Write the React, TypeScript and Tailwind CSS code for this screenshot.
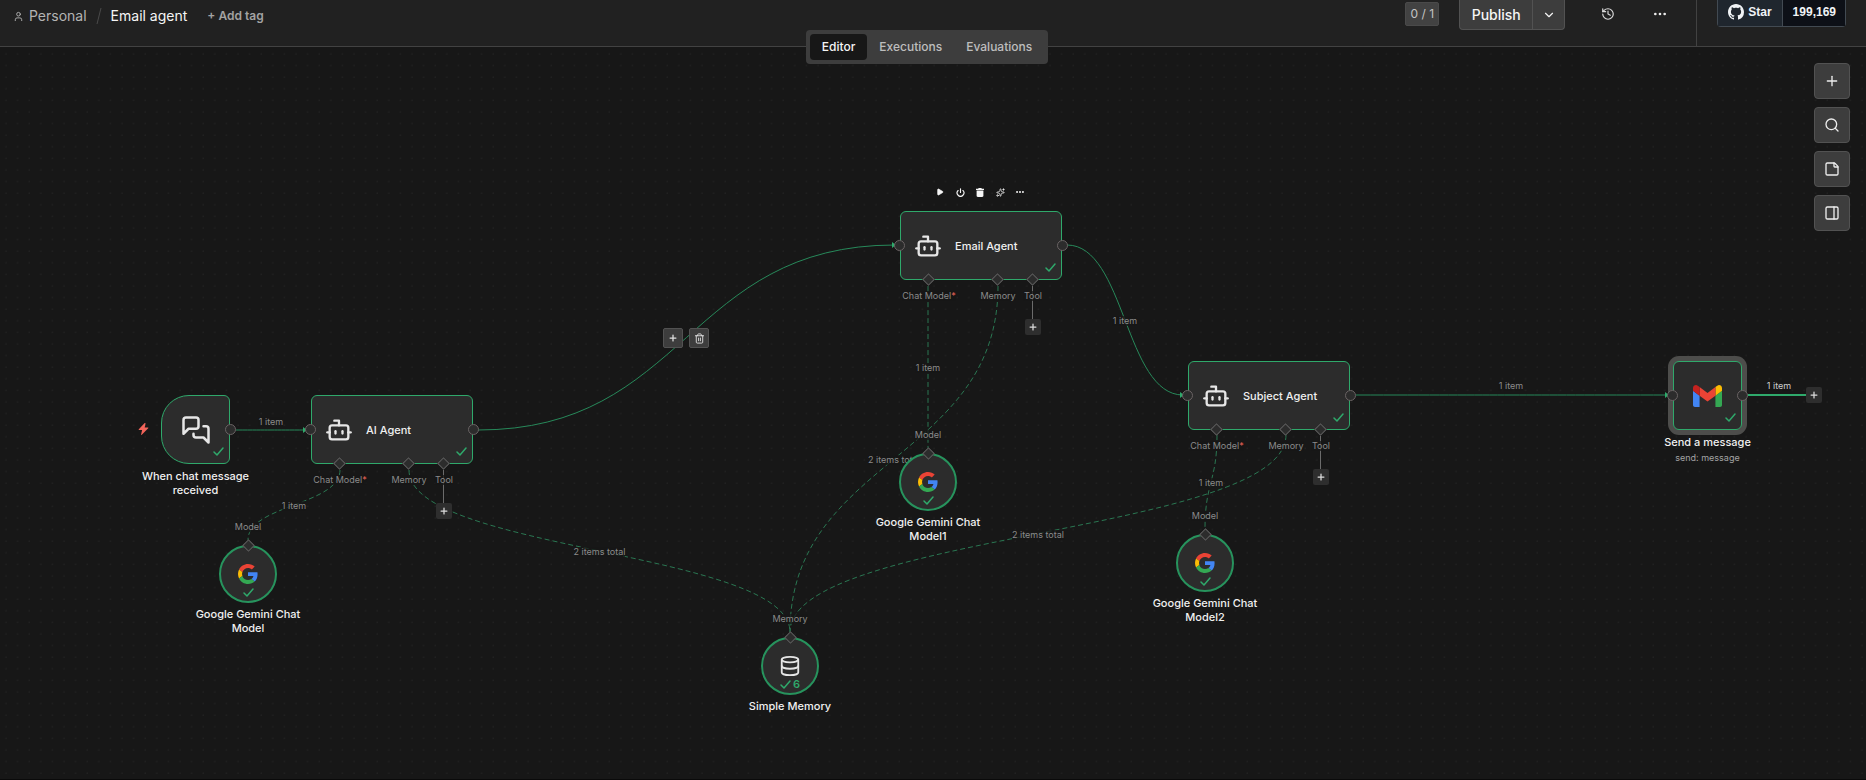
import React from 'react'
import {
  Bot,
  ChevronDown,
  Database,
  Ellipsis,
  History,
  PanelRight,
  Play,
  Plus,
  Power,
  Search,
  Sparkles,
  StickyNote,
  Trash2,
  User,
} from 'lucide-react'

type Point = [number, number]

interface Edge {
  from: Point
  to: Point
  kind: 'main' | 'sub'
  label?: string
}

interface AgentNode {
  title: string
  x: number
  y: number
  showToolbar?: boolean
}

interface SubNode {
  title: string
  port: string
  x: number
  y: number
  kind: 'google' | 'memory'
  runs?: number
}

// All coordinates are relative to the canvas origin
const EDGES: Edge[] = [
  { from: [236, 383], to: [306, 383], kind: 'main' },
  { from: [478, 383], to: [895, 198], kind: 'main' },
  { from: [1067, 198], to: [1183, 348], kind: 'main', label: '1 item' },
  { from: [1356, 348], to: [1668, 348], kind: 'main' },
  { from: [340, 423], to: [248, 493], kind: 'sub', label: '1 item' },
  { from: [409, 423], to: [790, 585], kind: 'sub', label: '2 items total' },
  { from: [928, 239], to: [928, 401], kind: 'sub', label: '1 item' },
  { from: [998, 239], to: [790, 585], kind: 'sub', label: '2 items total' },
  { from: [1217, 388], to: [1205, 482], kind: 'sub', label: '1 item' },
  { from: [1286, 388], to: [790, 585], kind: 'sub', label: '2 items total' },
]

const AGENTS: AgentNode[] = [
  { title: 'AI Agent', x: 311, y: 348 },
  { title: 'Email Agent', x: 900, y: 164, showToolbar: true },
  { title: 'Subject Agent', x: 1188, y: 314 },
]

const SUB_NODES: SubNode[] = [
  { title: 'Google Gemini Chat Model', port: 'Model', x: 248, y: 527, kind: 'google' },
  { title: 'Google Gemini Chat Model1', port: 'Model', x: 928, y: 435, kind: 'google' },
  { title: 'Google Gemini Chat Model2', port: 'Model', x: 1205, y: 516, kind: 'google' },
  { title: 'Simple Memory', port: 'Memory', x: 790, y: 619, kind: 'memory', runs: 6 },
]

const edgePath = ({ from, to, kind }: Edge) => {
  const [x1, y1] = from
  const [x2, y2] = to
  const mx = (x1 + x2) / 2
  const my = (y1 + y2) / 2
  return kind === 'main'
    ? `M${x1} ${y1}C${mx} ${y1} ${mx} ${y2} ${x2} ${y2}`
    : `M${x1} ${y1}C${x1} ${my} ${x2} ${my} ${x2} ${y2}`
}

const GoogleIcon = () => (
  <svg viewBox="0 0 48 48" className="w-5 h-5" aria-hidden="true">
    <path fill="#EA4335" d="M24 9.5c3.54 0 6.71 1.22 9.21 3.6l6.85-6.85C35.9 2.38 30.47 0 24 0 14.62 0 6.51 5.38 2.56 13.22l7.98 6.19C12.43 13.72 17.74 9.5 24 9.5z" />
    <path fill="#4285F4" d="M46.98 24.55c0-1.57-.15-3.09-.38-4.55H24v9.02h12.94c-.58 2.96-2.26 5.48-4.78 7.18l7.73 6c4.51-4.18 7.09-10.36 7.09-17.65z" />
    <path fill="#FBBC05" d="M10.53 28.59c-.48-1.45-.76-2.99-.76-4.59s.27-3.14.76-4.59l-7.98-6.19C.92 16.46 0 20.12 0 24c0 3.88.92 7.54 2.56 10.78l7.97-6.19z" />
    <path fill="#34A853" d="M24 48c6.48 0 11.93-2.13 15.89-5.81l-7.73-6c-2.15 1.45-4.92 2.3-8.16 2.3-6.26 0-11.57-4.22-13.47-9.91l-7.98 6.19C6.51 42.62 14.62 48 24 48z" />
  </svg>
)

const GmailIcon = () => (
  <svg viewBox="52 42 88 66" className="w-[29px] h-[22px]" aria-hidden="true">
    <path fill="#4285F4" d="M58 108h14V74L52 59v43c0 3.32 2.69 6 6 6" />
    <path fill="#34A853" d="M120 108h14c3.32 0 6-2.69 6-6V59l-20 15" />
    <path fill="#FBBC04" d="M120 48v26l20-15v-8c0-7.42-8.47-11.65-14.4-7.2" />
    <path fill="#EA4335" d="M72 74V48l24 18 24-18v26L96 92" />
    <path fill="#C5221F" d="M52 51v8l20 15V48l-5.6-4.2c-5.94-4.45-14.4-.22-14.4 7.2" />
  </svg>
)

const GithubIcon = () => (
  <svg viewBox="0 0 16 16" className="w-4 h-4" fill="currentColor" aria-hidden="true">
    <path d="M8 0C3.58 0 0 3.58 0 8c0 3.54 2.29 6.53 5.47 7.59.4.07.55-.17.55-.38 0-.19-.01-.82-.01-1.49-2.01.37-2.53-.49-2.69-.94-.09-.23-.48-.94-.82-1.13-.28-.15-.68-.52-.01-.53.63-.01 1.08.58 1.23.82.72 1.21 1.87.87 2.33.66.07-.52.28-.87.51-1.07-1.78-.2-3.64-.89-3.64-3.95 0-.87.31-1.59.82-2.15-.08-.2-.36-1.02.08-2.12 0 0 .67-.21 2.2.82.64-.18 1.32-.27 2-.27s1.36.09 2 .27c1.53-1.04 2.2-.82 2.2-.82.44 1.1.16 1.92.08 2.12.51.56.82 1.27.82 2.15 0 3.07-1.87 3.75-3.65 3.95.29.25.54.73.54 1.48 0 1.07-.01 1.93-.01 2.2 0 .21.15.46.55.38A8.01 8.01 0 0 0 16 8c0-4.42-3.58-8-8-8z" />
  </svg>
)

const ChatIcon = () => (
  <svg viewBox="0 0 24 24" className="w-[30px] h-[30px]" fill="none" stroke="currentColor" strokeWidth="2" strokeLinecap="round" strokeLinejoin="round" aria-hidden="true">
    <path d="M14 9a2 2 0 0 1-2 2H6l-4 4V4a2 2 0 0 1 2-2h8a2 2 0 0 1 2 2z" />
    <path d="M18 9h2a2 2 0 0 1 2 2v11l-4-4h-6a2 2 0 0 1-2-2v-1" />
  </svg>
)

const BoltIcon = () => (
  <svg viewBox="0 0 10 12" className="w-[11px] h-3 text-[#f2645a]" fill="currentColor" aria-hidden="true">
    <path d="M6.2 0L.3 6.3c-.3.4-.1.8.4.8h2.9l-1 4.3c-.1.5.4.7.7.3l6.4-6.4c.3-.4.1-.8-.4-.8H6.2l.8-4c.1-.5-.5-.8-.8-.5z" />
  </svg>
)

const TrashSolidIcon = () => (
  <svg viewBox="0 0 8 9" className="w-2 h-[9px]" fill="currentColor" aria-hidden="true">
    <path d="M2.6 0h2.8l.4.7H8V2H0V.7h2.2zM.6 2.6h6.8v5.2c0 .7-.5 1.2-1.2 1.2H1.8C1.1 9 .6 8.5.6 7.8z" />
  </svg>
)

const CheckIcon = () => (
  <svg viewBox="0 0 11 9" className="w-[11px] h-[9px] text-[#2fa96b]" fill="none" stroke="currentColor" strokeWidth="1.5" strokeLinecap="round" strokeLinejoin="round" aria-hidden="true">
    <path d="M1 5l3 3 6-7" />
  </svg>
)

const Diamond = ({ className }: { className: string }) => (
  <span className={`absolute w-[9px] h-[9px] rotate-45 bg-[#2c2c2c] border border-[#5e5e5e] ${className}`} />
)

const Handle = ({ className }: { className: string }) => (
  <span className={`absolute top-[29px] w-[11px] h-[11px] rounded-full bg-[#2c2c2c] border border-[#6a6364] ${className}`} />
)

const AddButton = ({ className, label }: { className: string; label: string }) => (
  <button aria-label={label} className={`absolute flex items-center justify-center w-4 h-4 rounded-xs bg-[#2e2e2e] text-[#dcdcdc] ${className}`}>
    <Plus size={10} strokeWidth={3} />
  </button>
)

const portLabel = 'absolute -translate-x-1/2 bg-[#171717]/75 text-[9px] leading-[10px] whitespace-nowrap text-[#8b8b8b]'
const nodeTitle = 'text-[11px] leading-[14px] font-medium text-[#f0f0f0]'

const Agent: React.FC<{ node: AgentNode }> = ({ node }) => (
  <div className="absolute" style={{ left: node.x, top: node.y }}>
    {node.showToolbar && (
      <div className="absolute -top-[25px] left-[35px] flex gap-[10px] text-[#f5f5f5]">
        <button aria-label="Execute step" className="flex items-center justify-center w-[10px] h-3">
          <Play size={8} fill="currentColor" />
        </button>
        <button aria-label="Deactivate" className="flex items-center justify-center w-[10px] h-3">
          <Power size={9} strokeWidth={3} />
        </button>
        <button aria-label="Delete" className="flex items-center justify-center w-[10px] h-3">
          <TrashSolidIcon />
        </button>
        <button aria-label="Tidy up" className="flex items-center justify-center w-[10px] h-3">
          <Sparkles size={9} />
        </button>
        <button aria-label="More" className="flex items-center justify-center w-[10px] h-3">
          <Ellipsis size={10} strokeWidth={3} />
        </button>
      </div>
    )}
    <div className="flex items-center w-[162px] h-[69px] rounded-md border border-[#2fa96b] bg-[#2c2c2c] pl-[13px]">
      <Bot size={28} className="text-[#e6e6e6]" />
      <span className={`ml-[13px] ${nodeTitle}`}>{node.title}</span>
    </div>
    <span className="absolute right-[6px] bottom-2">
      <CheckIcon />
    </span>
    <Handle className="-left-[6px]" />
    <Handle className="-right-[6px]" />
    <span className="absolute top-[75px] left-[132px] w-px h-[34px] bg-[#6b6b6b]" />
    <Diamond className="top-16 left-6" />
    <Diamond className="top-16 left-[93px]" />
    <Diamond className="top-16 left-32" />
    <span className={`${portLabel} top-20 left-[29px]`}>
      Chat Model<span className="text-[#f2645a]">*</span>
    </span>
    <span className={`${portLabel} top-20 left-[98px]`}>Memory</span>
    <span className={`${portLabel} top-20 left-[133px]`}>Tool</span>
    <AddButton label="Add tool" className="top-[108px] left-[125px]" />
  </div>
)

const RoundNode: React.FC<{ node: SubNode }> = ({ node }) => (
  <div className="absolute flex flex-col items-center w-[120px] -translate-x-1/2" style={{ left: node.x, top: node.y - 29 }}>
    <span className={`${portLabel} -top-[23px] left-1/2`}>{node.port}</span>
    <div className="relative flex items-center justify-center w-[58px] h-[58px] rounded-full border-2 border-[#27935d] bg-[#2c2c2c]">
      {node.kind === 'google' ? <GoogleIcon /> : <Database size={22} className="text-[#e6e6e6]" />}
      <span className="absolute inset-x-0 bottom-[3px] flex items-center justify-center gap-[2px] h-3 text-[11px] leading-3 font-semibold text-[#2fa96b]">
        <CheckIcon />
        {node.runs}
      </span>
    </div>
    <Diamond className="-top-1" />
    <span className={`mt-1 text-center ${nodeTitle}`}>{node.title}</span>
  </div>
)

const EdgeLabel: React.FC<{ x: number; y: number; text: string; light?: boolean }> = ({ x, y, text, light }) => (
  <span
    className={`absolute -translate-x-1/2 -translate-y-1/2 bg-[#171717]/75 text-[9px] leading-[10px] whitespace-nowrap ${light ? 'text-[#cfcfcf]' : 'text-[#8b8b8b]'}`}
    style={{ left: x, top: y }}
  >
    {text}
  </span>
)

const Canvas = () => (
  <div className="absolute inset-0 overflow-hidden">
    <svg className="absolute inset-0 w-full h-full" fill="none" aria-hidden="true">
      <defs>
        <pattern id="dots" width="11.6" height="11.6" patternUnits="userSpaceOnUse">
          <circle cx="6" cy="7" r="0.6" fill="#2a2a2a" />
        </pattern>
        <marker id="arrow" viewBox="0 0 4 6" refX="3" refY="3" markerWidth="4" markerHeight="6" markerUnits="userSpaceOnUse">
          <path d="M0 0l4 3-4 3z" fill="#2fa96b" />
        </marker>
      </defs>
      <rect width="100%" height="100%" fill="url(#dots)" />
      {EDGES.map((edge, i) => (
        <path
          key={i}
          d={edgePath(edge)}
          stroke={edge.kind === 'main' ? '#27895a' : '#2a7752'}
          strokeWidth="1"
          strokeDasharray={edge.kind === 'sub' ? '5 3' : undefined}
          markerEnd={edge.kind === 'main' ? 'url(#arrow)' : undefined}
        />
      ))}
      <path d="M1748 348H1806" stroke="#2fa96b" strokeWidth="2" />
    </svg>

    {EDGES.map(
      ({ from, to, label }, i) =>
        label && <EdgeLabel key={i} x={(from[0] + to[0]) / 2} y={(from[1] + to[1]) / 2 + 1} text={label} />
    )}
    <EdgeLabel x={271} y={375} text="1 item" />
    <EdgeLabel x={1511} y={339} text="1 item" />
    <EdgeLabel x={1779} y={339} text="1 item" light />

    {/* Chat trigger */}
    <div className="absolute top-[348px] left-[161px]">
      <div className="flex items-center justify-center w-[69px] h-[69px] rounded-l-[28px] rounded-r-md border border-[#2fa96b] bg-[#2c2c2c] text-[#e6e6e6]">
        <ChatIcon />
      </div>
      <span className="absolute top-7 -left-[23px]">
        <BoltIcon />
      </span>
      <span className="absolute right-[6px] bottom-2">
        <CheckIcon />
      </span>
      <Handle className="-right-[6px]" />
      <span className={`absolute top-[74px] left-1/2 w-[120px] -translate-x-1/2 text-center ${nodeTitle}`}>
        When chat message received
      </span>
    </div>

    {AGENTS.map((node) => (
      <Agent key={node.title} node={node} />
    ))}
    {SUB_NODES.map((node) => (
      <RoundNode key={node.title} node={node} />
    ))}

    {/* Gmail node, selected */}
    <div className="absolute top-[314px] left-[1673px]">
      <div className="flex items-center justify-center w-[69px] h-[69px] rounded-md border border-[#2fa96b] bg-[#2c2c2c] ring-[5px] ring-[#4d4d4b]">
        <GmailIcon />
      </div>
      <span className="absolute right-[6px] bottom-2">
        <CheckIcon />
      </span>
      <Handle className="-left-[6px]" />
      <Handle className="-right-[6px]" />
      <AddButton label="Add node" className="top-[26px] left-[133px]" />
      <div className="absolute top-[74px] left-1/2 flex flex-col items-center gap-[2px] -translate-x-1/2 whitespace-nowrap">
        <span className={nodeTitle}>Send a message</span>
        <span className="text-[9px] leading-[14px] text-[#a3a3a3]">send: message</span>
      </div>
    </div>

    {/* Hovered edge actions */}
    <div className="absolute top-[281px] left-[663px] flex gap-[6px] text-[#e0e0e0]">
      <button aria-label="Add node to connection" className="flex items-center justify-center w-5 h-5 rounded-xs border border-[#525252] bg-[#3d3d3d]">
        <Plus size={10} strokeWidth={3} />
      </button>
      <button aria-label="Delete connection" className="flex items-center justify-center w-5 h-5 rounded-xs border border-[#525252] bg-[#3d3d3d]">
        <Trash2 size={11} />
      </button>
    </div>
  </div>
)

const CanvasTools = () => {
  const tools = [
    { label: 'Add node', icon: <Plus size={16} /> },
    { label: 'Search', icon: <Search size={16} /> },
    { label: 'Add sticky note', icon: <StickyNote size={16} /> },
    { label: 'Toggle panel', icon: <PanelRight size={16} /> },
  ]

  return (
    <div className="absolute top-4 right-4 flex flex-col gap-2">
      {tools.map(({ label, icon }) => (
        <button
          key={label}
          aria-label={label}
          className="flex items-center justify-center w-9 h-9 rounded-sm border border-[#525252] bg-[#3d3d3d] text-[#ededed]"
        >
          {icon}
        </button>
      ))}
    </div>
  )
}

const Header = () => (
  <header className="flex items-start justify-between h-[47px] border-b border-[#424242] bg-[#212121]">
    <nav className="flex items-center h-8 pl-[13px] text-sm" aria-label="Breadcrumb">
      <a href="#personal" className="flex items-center gap-[5px] text-[#b4b4b4]">
        <User size={11} strokeWidth={2} />
        Personal
      </a>
      <svg viewBox="0 0 6 18" className="w-[6px] h-[18px] mx-[9px]" stroke="#4a4a4a" aria-hidden="true">
        <path d="M1 17L5 1" />
      </svg>
      <span className="text-[#f5f5f5]">Email agent</span>
      <button className="ml-5 text-xs font-semibold text-[#a3a3a3]">+ Add tag</button>
    </nav>

    <div className="flex items-start h-full pr-5">
      <span className="mt-[2px] w-[34px] rounded-xs border border-[#4a4a4a] bg-[#424242] text-center text-xs leading-[22px] text-[#c4c4c4]">
        0 / 1
      </span>
      <div className="ml-5 flex h-[30px] rounded-b-sm border border-t-0 border-[#525252] bg-[#3d3d3d] text-[#f5f5f5]">
        <button className="w-[73px] border-r border-[#525252] text-sm font-medium">Publish</button>
        <button aria-label="Publish options" className="flex items-center justify-center w-[31px]">
          <ChevronDown size={14} />
        </button>
      </div>
      <button aria-label="Version history" className="ml-9 flex items-center h-7 text-[#dcdcdc]">
        <History size={14} />
      </button>
      <button aria-label="Workflow menu" className="ml-[37px] flex items-center h-7 text-[#ededed]">
        <Ellipsis size={16} strokeWidth={2} />
      </button>
      <span className="ml-7 w-px h-full bg-[#424242]" />
      <div className="ml-5 flex h-[27px] rounded-b-sm border border-t-0 border-[#424a52] font-['Liberation_Sans',sans-serif] text-xs font-bold text-[#f0f3f6]">
        <a href="#star" className="flex items-center gap-1 px-[10px] pb-[2px] border-r border-[#424a52] bg-[#1f262e]">
          <GithubIcon />
          Star
        </a>
        <a href="#stargazers" className="flex items-center pl-[10px] pr-[9px] pb-[2px] bg-[#0d1017]">199,169</a>
      </div>
    </div>
  </header>
)

const ViewTabs = () => {
  const tabs = ['Editor', 'Executions', 'Evaluations']

  return (
    <div className="absolute inset-x-0 top-[30px] z-10 flex justify-center pr-3 pointer-events-none">
      <div className="flex p-1 rounded-sm bg-[#3d3d3d] text-xs font-medium pointer-events-auto">
        {tabs.map((tab, i) => (
          <button
            key={tab}
            className={`h-[26px] px-3 rounded-sm ${i === 0 ? 'bg-[#171717] text-[#f5f5f5]' : 'text-[#bdbdbd]'}`}
          >
            {tab}
          </button>
        ))}
      </div>
    </div>
  )
}

export default function App() {
  return (
    <div className="relative flex flex-col min-h-screen border-b border-[#0a0a0a] bg-[#171717] font-['Inter',sans-serif]">
      <Header />
      <ViewTabs />
      <main className="relative flex-1">
        <Canvas />
        <CanvasTools />
      </main>
    </div>
  )
}
